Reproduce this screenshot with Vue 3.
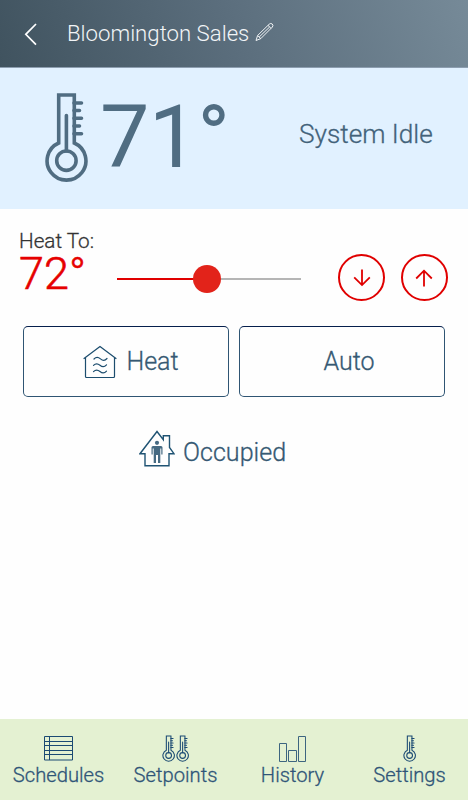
<script setup>
import { ref, computed } from "vue";

const zone = ref("Bloomington Sales");
const temp = ref(71);
const setpoint = ref(72);
const min = 57.4;
const max = 87.4;

const percent = computed(() => ((setpoint.value - min) / (max - min)) * 100);

const change = (step) => {
  const next = setpoint.value + step;
  if (next > min && next < max) setpoint.value = next;
};

const tabs = [
  { name: "Schedules", icon: "list" },
  { name: "Setpoints", icon: "thermo", count: 2 },
  { name: "History", icon: "bars" },
  { name: "Settings", icon: "thermo", count: 1 },
];
</script>

<template>
  <div class="screen">
    <!-- thermometer shared by the reading and the tab bar -->
    <svg class="defs" width="0" height="0">
      <symbol id="thermo" viewBox="0 0 44 90">
        <g fill="none" stroke="currentColor" stroke-width="3.6">
          <path d="M14.7 51V3h15.6v48a19.4 19.4 0 1 1-15.6 0z" />
          <circle cx="22.4" cy="68.7" r="9.7" />
          <path d="M22.4 59V23.5M30 11h7.5M30 18.5h5.5M30 26.3h7.5M30 34h5.5M30 41.7h7.5" stroke-linecap="round" />
        </g>
      </symbol>
    </svg>

    <header class="header">
      <svg class="back" width="14" height="24" viewBox="0 0 14 24">
        <path d="M12 2L1.8 12.3 12 22.6" fill="none" stroke="#fff" stroke-width="1.7" />
      </svg>
      <h1>{{ zone }}</h1>
      <svg class="edit" width="20" height="20" viewBox="0 0 20 20">
        <path
          d="M1 18.5l1.6-5L14.2 2.2q1.6-1.4 3-.2t.2 3L5.8 16.6zM2.6 13.5l3.2 3.1M13 3.4l3.2 3.1M4.2 15L14.6 5"
          fill="none"
          stroke="#f2f5f7"
        />
      </svg>
    </header>

    <section class="current">
      <svg class="thermo"><use href="#thermo" /></svg>
      <div class="temp">{{ temp }}°</div>
      <div class="status">System Idle</div>
    </section>

    <section class="control">
      <div class="target">
        <div class="target-label">Heat To:</div>
        <div class="target-temp">{{ setpoint }}°</div>
      </div>
      <div class="slider">
        <div class="fill" :style="{ width: percent + '%' }"></div>
        <div class="thumb" :style="{ left: percent + '%' }"></div>
      </div>
      <button class="round" @click="change(-1)">
        <svg width="18" height="20" viewBox="0 0 18 20">
          <path d="M9 1.5v16M1.2 9.3L9 17.1l7.8-7.8" />
        </svg>
      </button>
      <button class="round" @click="change(1)">
        <svg width="18" height="20" viewBox="0 0 18 20">
          <path d="M9 18.5v-16M1.2 10.5L9 2.7l7.8 7.8" />
        </svg>
      </button>
    </section>

    <section class="modes">
      <button class="mode">
        <svg width="34" height="34" viewBox="0 0 34 34">
          <g fill="none" stroke="#1c4d6e" stroke-width="1.2" stroke-linecap="round">
            <path d="M1 13.5L17 1.5l16 12M2.5 12.7V31.5q0 1 1 1h27q1 0 1-1V12.7" />
            <path d="M11 14q3-3 6.5-.1t6.5-.4M10.500 20.3q3-3 6.5-.1t6.5-.4M10.500 26.6q3-3 6.5-.1t6.5-.4" />
          </g>
        </svg>
        <span>Heat</span>
      </button>
      <button class="mode"><span>Auto</span></button>
    </section>

    <section class="occupancy">
      <svg width="36" height="37" viewBox="0 0 36 37">
        <path
          d="M18 1.5L1 23.7h5V35.7h24V23.7h5L30.5 17.5V5.7h-6.2v4z"
          fill="none"
          stroke="#1f5373"
          stroke-width="1.4"
        />
        <g fill="#466a82">
          <circle cx="18" cy="12.8" r="2.1" />
          <path d="M14 16h8q1.500 0 1.500 1.500V24.500h-1.200v-6h-1V33h-2.300v-8h-2v8h-2.300V18.500h-1v6h-1.200v-7Q12.500 16 14 16z" />
        </g>
      </svg>
      <span>Occupied</span>
    </section>

    <nav class="tabs">
      <a v-for="tab in tabs" :key="tab.name" class="tab">
        <div class="tab-icon">
          <svg v-if="tab.icon === 'list'" width="29" height="25" viewBox="0 0 29 25">
            <path
              d="M.5.5h28v23.5H.5zM.5 5.500h28M.5 9.500h28M.5 14.500h28M.5 18.500h28M5.500.5v23.500"
              fill="none"
              stroke="#1b4a73"
            />
          </svg>
          <svg v-else-if="tab.icon === 'bars'" width="28" height="27" viewBox="0 0 28 27">
            <path
              d="M.5 8.500h7v18h-7zM9.500 15.500h8v11h-8zM19.500 1.500h7v25h-7z"
              fill="none"
              stroke="#3d6580"
            />
          </svg>
          <template v-else>
            <svg v-for="n in tab.count" :key="n" class="small-thermo"><use href="#thermo" /></svg>
          </template>
        </div>
        <span>{{ tab.name }}</span>
      </a>
    </nav>
  </div>
</template>

<style>
body {
  margin: 0;
  background: #fff;
}
</style>

<style scoped>
.screen {
  display: flex;
  flex-direction: column;
  width: 468px;
  height: 800px;
  overflow: hidden;
  background: #fefefe;
  font-family: Roboto, "Liberation Sans", sans-serif;
  font-weight: 300;
  color: #365973;
  -webkit-text-stroke: 0.3px currentColor;
}

.defs {
  position: absolute;
}

svg {
  display: block;
  flex-shrink: 0;
}

button {
  box-sizing: border-box;
  margin: 0;
  padding: 0;
  background: none;
  font: inherit;
  color: inherit;
}

.header {
  box-sizing: border-box;
  display: flex;
  align-items: center;
  flex-shrink: 0;
  height: 68px;
  padding-left: 24px;
  border-bottom: 1px solid #8d9eb0;
  background: linear-gradient(70deg, #40535f, #5b6e7d 50%, #768a98);
}

.header h1 {
  margin: -1px 0 0 29px;
  font-size: 22.2px;
  font-weight: 300;
  line-height: 30px;
  color: #f2f5f7;
  -webkit-text-stroke: 0;
}

.edit {
  margin: -4px 0 0 6px;
}

.current {
  display: flex;
  flex-shrink: 0;
  height: 141px;
  background: #e1f1ff;
  color: #506d82;
}

.thermo {
  width: 44px;
  height: 90px;
  margin: 24px 0 0 44px;
}

.temp {
  width: 199px;
  margin: 17px 0 0 12px;
  font-size: 88px;
  font-weight: 400;
  line-height: 104px;
  letter-spacing: -0.8px;
  -webkit-text-stroke: 0;
}

.status {
  margin-top: 51px;
  font-size: 26.2px;
  line-height: 30px;
  color: #42627a;
}

.control {
  display: flex;
  flex-shrink: 0;
  height: 117px;
}

.target {
  width: 98px;
  padding: 20px 0 0 19px;
}

.target-label {
  font-size: 20.7px;
  line-height: 24px;
  color: #333;
}

.target-temp {
  font-size: 45px;
  line-height: 42px;
  color: #e60000;
  -webkit-text-stroke-width: 0.6px;
}

.slider {
  position: relative;
  width: 184px;
  height: 2px;
  margin: 69px 37px 0 0;
  background: #b5b5b5;
}

.fill {
  height: 100%;
  background: #e00000;
}

.thumb {
  position: absolute;
  top: -13px;
  width: 28px;
  height: 28px;
  margin-left: -14px;
  border-radius: 50%;
  background: #e2231a;
}

.round {
  display: flex;
  align-items: center;
  justify-content: center;
  width: 47px;
  height: 47px;
  margin: 45px 15.5px 0 0;
  border: 2px solid #e00000;
  border-radius: 50%;
}

.round path {
  fill: none;
  stroke: #e00000;
  stroke-width: 1.8;
}

.modes {
  display: flex;
  flex-shrink: 0;
  gap: 10px;
  padding: 0 23px;
}

.mode {
  display: flex;
  align-items: center;
  justify-content: center;
  gap: 9px;
  width: 206px;
  height: 71px;
  padding-left: 10px;
  border: 1px solid #2f5573;
  border-top-color: #061f4c;
  border-radius: 5px;
  font-size: 25px;
}

.mode:last-child {
  padding-left: 14px;
}

.occupancy {
  display: flex;
  align-items: center;
  gap: 8px;
  margin: 33px 0 0 139px;
  font-size: 25.1px;
}

.occupancy span {
  margin-top: 8px;
}

.tabs {
  display: flex;
  flex-shrink: 0;
  height: 81px;
  margin-top: auto;
  background: #e4f1d2;
  color: #2f5578;
}

.tab {
  display: flex;
  flex-direction: column;
  align-items: center;
  width: 117px;
  font-size: 20.2px;
  line-height: 24px;
}

.tab-icon {
  display: flex;
  align-items: center;
  gap: 1px;
  height: 28px;
  margin: 15px 0 1px;
  color: #1b4a73;
}

.small-thermo {
  width: 13px;
  height: 27px;
}
</style>
